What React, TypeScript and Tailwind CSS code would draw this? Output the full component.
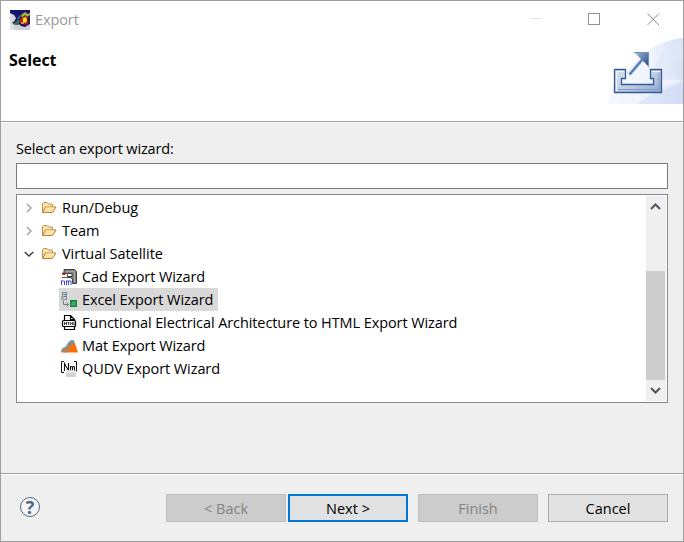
import type { ReactNode } from 'react';

function AppIcon() {
  return (
    <svg width="20" height="20" viewBox="0 0 20 20">
      <rect width="20" height="20" fill="#17146e" />
      <path d="M0 3l4 2 2 3-2 4-4 2z" fill="#d9dade" />
      <path d="M0 13l5 1 3-1 3 3 4 1 5-3v6H0z" fill="#cdd0d8" />
      <path d="M0 13h3l2 7H0z" fill="#dfe0e3" />
      <path d="M2 13l6-5 6-5 3 1-4 6-5 5z" fill="#1d2c3c" />
      <path d="M3 14l5-4 3 1-3 3-3 1z" fill="#3f6b58" />
      <path d="M7 8l3-3 1 1-3 4z" fill="#4d60a0" />
      <path d="M11 5l4-3 3 2 2-1v2l-3 2-2-2-3 3z" fill="#a3b52c" />
      <path d="M10 9l4-3 4 1 1 4-2 4-5-1-2-2z" fill="#b31b12" />
      <path d="M13 8l3-1 1 3-1 3-3-1z" fill="#f7e51b" />
      <path d="M11 12h3v2h-3z" fill="#ee8b1c" />
      <path d="M17.500 8H20v6h-2z" fill="#35122f" />
    </svg>
  );
}

function ExportBanner() {
  return (
    <svg width="75" height="66" viewBox="0 0 75 66">
      <defs>
        <linearGradient id="haze" x1="0" y1="0" x2="1" y2="0">
          <stop offset="0" stopColor="#f6f9fe" />
          <stop offset="0.6" stopColor="#eef3fc" />
          <stop offset="1" stopColor="#d6e0f6" />
        </linearGradient>
        <linearGradient id="tray" x1="0" y1="0" x2="1" y2="1">
          <stop offset="0" stopColor="#d7e0ee" />
          <stop offset="0.5" stopColor="#c3d0e5" />
          <stop offset="1" stopColor="#8da5cc" />
        </linearGradient>
        <linearGradient id="head" x1="0" y1="0" x2="1" y2="1">
          <stop offset="0" stopColor="#a9bfe0" />
          <stop offset="1" stopColor="#1d4480" />
        </linearGradient>
      </defs>
      <path d="M0 66C2 50 9 40 20 32C34 14 52 2 75 0V66Z" fill="url(#haze)" />
      <path d="M46 30C50 18 60 6 75 2V22C63 24 53 27 46 30Z" fill="#dfe8f9" opacity="0.6" />
      <path d="M30 66C40 56 57 50 75 46V66Z" fill="#cbd8f3" opacity="0.5" />
      <path d="M46 44C56 41 66 41 75 43C65 46 57 47 48 50Z" fill="#fff" opacity="0.45" />
      <path d="M6.500 31.500H17.500V40.500H13.500V46.500H45.500V40.500H42.500V31.500H53.500V54.500H6.500Z" fill="url(#tray)" stroke="#355b95" strokeWidth="1.300" />
      <path d="M8.500 53V33.500H15.500M44 33.500h8" stroke="#f2f6fc" fill="none" />
      <path d="M10 51.500H51V35" stroke="#829cc7" fill="none" />
      <path d="M21.500 36.500L36 19.500" stroke="#c4d0e4" strokeWidth="3.500" />
      <path d="M21.500 36.500L37 18.500" stroke="#537bb0" strokeWidth="2" />
      <path d="M26 14H41V29Z" fill="url(#head)" />
      <path d="M26 14.500H40.500V28" stroke="#7390bd" fill="none" />
    </svg>
  );
}

function Folder() {
  return (
    <svg width="16" height="16" viewBox="0 0 16 16">
      <path d="M1.500 12.500V3.500L2.500 2.500H6L7.500 4H11L11.500 5V7" fill="#f8e3ae" stroke="#c58e45" />
      <path d="M1.500 12.500L4.500 7H15L11.500 12.500Z" fill="#fae1a2" stroke="#bd7f35" strokeLinejoin="round" />
      <path d="M5 8H13" stroke="#fff4ce" />
    </svg>
  );
}

function CadIcon() {
  return (
    <svg width="16" height="16" viewBox="0 0 16 16">
      <path d="M3 .5H13.500L15.500 2.500V14.500H11.500V10L9.500 8.500H6.500V7.500H11V4.500H3Z" fill="#858585" stroke="#3f3b3b" />
      <path d="M5 2.500H13.500V13" stroke="#a5a2a2" fill="none" />
      <path d="M1 4.500H7M1 8.500H7M6.500 4v5" stroke="#555" fill="none" />
      <path d="M1.500 3.500H4.500V6H1.500Z" fill="#a31f21" />
      <path d="M.5 16v-4.500M.5 12h3v4M5.500 16v-4.500M5.500 12H10v4M7.500 12v4" fill="none" stroke="#2b35e0" strokeWidth=".9" />
    </svg>
  );
}

function ExcelIcon() {
  return (
    <svg width="16" height="16" viewBox="0 0 16 16">
      <rect x="1.500" y=".5" width="4" height="7" fill="#d1d4de" stroke="#858a98" />
      <path d="M2.500 2.500h2.500M2.500 4.500h2.500" stroke="#62729b" />
      <rect x="0" y="4.500" width="3" height="4" fill="#9fb3a7" />
      <path d="M2.500 9v3.500H7M5.500 10.500l2 2-2 2" stroke="#75777d" fill="none" />
      <rect x="9.500" y="8.500" width="6" height="6" fill="#239847" stroke="#168139" />
      <path d="M11 10l3.500 3.500M14 10l-3 3.500" stroke="#75bd86" strokeWidth=".8" />
    </svg>
  );
}

function HtmlIcon() {
  return (
    <svg width="16" height="16" viewBox="0 0 16 16" fill="none" stroke="#000">
      <path d="M3.500 5V.5H9.500L13.500 4.500V6M9.500 .5V4.500H13.500M3.500 11.500V14.500H13.500V11.500" strokeWidth="1.200" />
      <rect x="1.500" y="5.500" width="13" height="6" rx="1" fill="#fff" strokeWidth="1.200" />
      <path d="M3.500 7v3M5.500 7v3M3.500 8.500h2M6.500 7.500h2M7.500 7.500V10M9.500 10V7.500l1 1 1-1V10M12.800 7v2.800h1" strokeWidth=".7" />
    </svg>
  );
}

function MatIcon() {
  return (
    <svg width="18" height="16" viewBox="0 0 18 16">
      <path d="M0 14.500L2 11L5 9L8 4.500L10.500 2.500H12L14 5.500L15.500 10L17 14.500Z" fill="#fb6c09" />
      <path d="M0 13.500L2 10.500L5 9L8 4.500L10.500 2.500H12L13.500 4.500" fill="none" stroke="#2fb1f4" strokeWidth="1.200" />
      <path d="M3.500 14.500L7 11L9 7.500L12.500 4" fill="none" stroke="#41a3cf" strokeWidth="1.200" />
    </svg>
  );
}

function QudvIcon() {
  return (
    <svg width="17" height="16" viewBox="0 0 17 16">
      <path d="M3 .5H.5v11H3M13 .5h2.500v10" fill="none" stroke="#111" />
      <path d="M3.500 10V2.500L7.500 9.500V2M9.500 10V5M9.500 6q1.500-1 2 0v4M11.500 6q1.500-1 2 0v4" fill="none" stroke="#111" strokeWidth="1.100" />
      <path d="M5 10.500Q10 8.500 15 10.500V16H5Z" fill="#d3d3d3" />
      <ellipse cx="10" cy="10.500" rx="5" ry="1.200" fill="#efefef" />
    </svg>
  );
}

function Chevron({ kind }: { kind: 'right' | 'down' }) {
  return (
    <svg width="10" height="10" viewBox="0 0 10 10" fill="none" strokeWidth="1.500">
      {kind === 'right' ? (
        <path d="M3 1L7 5L3 9" stroke="#a6a6a6" />
      ) : (
        <path d="M.8 3L5 7L9.200 3" stroke="#404040" />
      )}
    </svg>
  );
}

function Group({ label, open }: { label: string; open?: boolean }) {
  return (
    <div className="flex h-[23px] items-center pl-[6px]">
      <Chevron kind={open ? 'down' : 'right'} />
      <span className="ml-[7px] w-[21px]"><Folder /></span>
      <span className="tracking-[-0.03px]">{label}</span>
    </div>
  );
}

function Item({ label, icon, selected }: { label: string; icon: ReactNode; selected?: boolean }) {
  return (
    <div className="flex h-[23px] pl-[41px]">
      <div className={`flex items-center pl-[2px] ${selected ? 'w-[159px] bg-[#d9d9d9]' : ''}`}>
        <span className="w-[21px] shrink-0">{icon}</span>
        <span className="tracking-[-0.09px]">{label}</span>
      </div>
    </div>
  );
}

const buttonBase = 'flex h-7 w-[120px] items-center justify-center pt-px';

export default function App() {
  return (
    <div className="flex h-[542px] w-[684px] flex-col border border-[#a0a0a0] bg-[#efefef] font-['Open_Sans','Noto_Sans',sans-serif] text-[14.5px] leading-[20px] whitespace-nowrap text-black">
      <header className="h-[120px] shrink-0 bg-white">
        <div className="flex h-[37px] items-center pl-[9px] text-[#999]">
          <AppIcon />
          <span className="ml-[5px] tracking-[-0.1px]">Export</span>
          <div className="ml-auto flex items-center pr-[23px]">
            <svg width="130" height="14" viewBox="0 0 130 14" fill="none" stroke="#929292" shapeRendering="crispEdges">
              <path d="M0 5.500H12" stroke="#e4e4e4" />
              <rect x="58.500" y=".5" width="11" height="11" />
              <path d="M117.500 .5L129 12M129 .5L117.500 12" shapeRendering="auto" />
            </svg>
          </div>
        </div>
        <div className="flex justify-between">
          <h1 className="pt-[12px] pl-2 text-[16px] font-bold tracking-[-0.05px]">Select</h1>
          <ExportBanner />
        </div>
      </header>
      <main className="flex h-[352px] shrink-0 flex-col border-t border-[#a0a0a0] px-[15px] shadow-[inset_0_1px_0_#fff]">
        <label className="mt-[17px] tracking-[-0.14px]" htmlFor="filter">Select an export wizard:</label>
        <input id="filter" className="mt-1 h-[26px] w-full shrink-0 border border-[#7a7a7a] bg-white px-1 outline-none" />
        <div className="mt-[5px] flex h-[209px] shrink-0 justify-between border border-[#828790] bg-white p-px">
          <div>
            <Group label="Run/Debug" />
            <Group label="Team" />
            <Group label="Virtual Satellite" open />
            <Item icon={<CadIcon />} label="Cad Export Wizard" />
            <Item icon={<ExcelIcon />} label="Excel Export Wizard" selected />
            <Item icon={<HtmlIcon />} label="Functional Electrical Architecture to HTML Export Wizard" />
            <Item icon={<MatIcon />} label="Mat Export Wizard" />
            <Item icon={<QudvIcon />} label="QUDV Export Wizard" />
          </div>
          <div className="flex w-5 flex-col bg-[#efefef]">
            <svg className="mt-[6px] ml-1" width="11" height="9" viewBox="0 0 11 9" fill="none" stroke="#555" strokeWidth="2"><path d="M1 7L5.500 2.500L10 7" /></svg>
            <div className="mt-[60px] h-[109px] w-[19px] bg-[#cdcdcd]" />
            <svg className="mt-[6px] ml-1" width="11" height="9" viewBox="0 0 11 9" fill="none" stroke="#555" strokeWidth="2"><path d="M1 2L5.500 6.500L10 2" /></svg>
          </div>
        </div>
      </main>
      <footer className="flex flex-1 items-start border-t border-[#a0a0a0] pr-[15px] pl-[19px] shadow-[inset_0_1px_0_#fff]">
        <div className="mt-[23px] flex h-5 w-5 items-center justify-center rounded-full border border-[#536786] bg-[#f5f5f5] text-[18px] font-bold text-[#4d638b]">?</div>
        <div className="mt-5 ml-auto flex">
          <button className={`${buttonBase} border border-[#bfbfbf] bg-[#cccccc] text-[#838383]`}>&lt; Back</button>
          <button className={`${buttonBase} ml-[2px] border-2 border-[#0078d7] bg-[#e1e1e1]`}>Next &gt;</button>
          <button className={`${buttonBase} ml-[10px] border border-[#bfbfbf] bg-[#cccccc] text-[#838383]`}>Finish</button>
          <button className={`${buttonBase} ml-[10px] border border-[#adadad] bg-[#e1e1e1]`}>Cancel</button>
        </div>
      </footer>
    </div>
  );
}
